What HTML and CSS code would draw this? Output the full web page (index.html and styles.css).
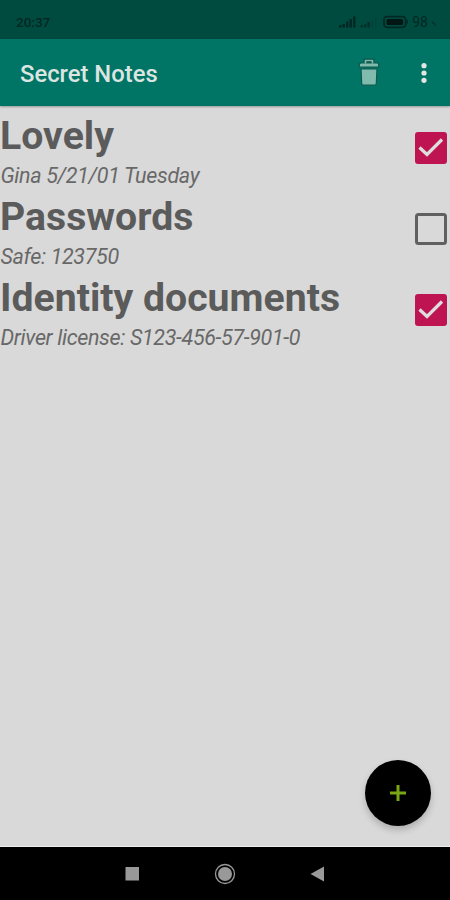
FILE: index.html
```
<!DOCTYPE html>
<html lang="en">
<head>
<meta charset="utf-8">
<title>Secret Notes</title>
<link rel="stylesheet" href="styles.css">
</head>
<body>
<div class="screen">
  <div class="statusbar">
    <span class="clock">20:37</span>
    <div class="status-icons">
      <svg class="signal" width="40" height="14" viewBox="0 0 40 14">
        <path d="M0 10h2.500v2.500H0zM3.500 9h2.500v3.500h-2.500zM7 6.500h2.500v6H7zM10.500 4h2.500v8.500h-2.500zM14 1.500h2.500v11H14z" fill="#032722"/>
        <path d="M21.500 10h2.500v2.500h-2.500zM25 9h2.500v3.500h-2.500zM28.500 7h2.500v5.500h-2.500z" fill="#03312a"/>
        <path d="M32.500 5h1.500v7.500h-1.500zM36 2.500h1.500v10H36z" fill="#034038"/>
      </svg>
      <svg class="battery" width="26" height="14" viewBox="0 0 26 14">
        <rect x="1" y="1.700" width="21.500" height="10.600" rx="3" fill="none" stroke="#032722" stroke-width="1.700"/>
        <rect x="3.500" y="4" width="16.500" height="6" rx="1.500" fill="#021713"/>
        <path d="M23.500 3.500q3 3.500 0 7z" fill="#032722"/>
      </svg>
      <span class="level">98</span>
      <svg class="charge" width="6" height="8" viewBox="0 0 6 8"><path d="M1 1.500l2 2.500M3.500 3.500L5 6" stroke="#03332c" stroke-width="1.400"/></svg>
    </div>
  </div>
  <header class="appbar">
    <h1 class="appbar-title">Secret Notes</h1>
    <svg class="trash" width="24" height="32" viewBox="0 0 24 32">
      <path d="M8.500 7V3.500h7V7" fill="none" stroke="#0a4d43" stroke-width="3.600"/>
      <path d="M2.300 8Q2.300 6 4.300 6h15.400q2 0 2 2v2.200H2.300zM4 12h16l-.7 14.500q-.2 1.700-2 1.700H6.700q-1.800 0-2-1.700z" fill="#80bbad" stroke="#0a5b4f" stroke-width="1.200"/>
      <path d="M8.500 6.500V3.500h7v3" fill="none" stroke="#80bbad" stroke-width="1.700"/>
    </svg>
    <svg class="more" width="8" height="22" viewBox="0 0 8 22"><g fill="#e2e7e5"><circle cx="4" cy="3.700" r="2.600"/><circle cx="4" cy="11" r="2.600"/><circle cx="4" cy="18.300" r="2.600"/></g></svg>
  </header>
  <main class="content">
    <section class="note">
      <div class="note-text"><h2 class="note-title">Lovely</h2><p class="note-body">Gina 5/21/01 Tuesday</p></div>
      <svg class="check" width="34" height="34" viewBox="0 0 34 34"><rect x="1" y="1" width="32" height="32" rx="3" fill="#bf1452"/><path d="M5.500 16.500L13 23.500 28 8.500" fill="none" stroke="#dedede" stroke-width="3.200"/></svg>
    </section>
    <section class="note">
      <div class="note-text"><h2 class="note-title">Passwords</h2><p class="note-body">Safe: 123750</p></div>
      <svg class="check" width="34" height="34" viewBox="0 0 34 34"><rect x="2.500" y="2.500" width="29" height="29" rx="2" fill="none" stroke="#606060" stroke-width="3"/></svg>
    </section>
    <section class="note">
      <div class="note-text"><h2 class="note-title">Identity documents</h2><p class="note-body">Driver license: S123-456-57-901-0</p></div>
      <svg class="check" width="34" height="34" viewBox="0 0 34 34"><rect x="1" y="1" width="32" height="32" rx="3" fill="#bf1452"/><path d="M5.500 16.500L13 23.500 28 8.500" fill="none" stroke="#dedede" stroke-width="3.200"/></svg>
    </section>
    <button class="fab" aria-label="Add note"><svg width="18" height="18" viewBox="0 0 18 18"><path d="M9 1v16M1 9h16" stroke="#79a615" stroke-width="3"/></svg></button>
  </main>
  <nav class="navbar">
    <svg width="24" height="24" viewBox="0 0 24 24"><rect x="5.500" y="5" width="13.500" height="13.500" fill="#999"/></svg>
    <svg width="24" height="24" viewBox="0 0 24 24"><circle cx="12" cy="12" r="9.500" fill="none" stroke="#999" stroke-width="1.300"/><circle cx="12" cy="12" r="7" fill="#999"/></svg>
    <svg width="24" height="24" viewBox="0 0 24 24"><path d="M4.500 12L18 4.500v15z" fill="#999"/></svg>
  </nav>
</div>
</body>
</html>
```
FILE: styles.css
```
* { box-sizing: border-box; }
body { margin: 0; font-family: Roboto, sans-serif; }
h1, h2, p { margin: 0; }
svg { display: block; flex: none; }
.screen { width: 450px; height: 900px; display: flex; flex-direction: column; overflow: hidden; background: #d9d9d9; }
.statusbar { height: 39px; flex: none; padding: 4px 13px 0 16px; display: flex; align-items: center; justify-content: space-between; background: #004b40; color: #032722; }
.clock { font-size: 13.5px; font-weight: 500; }
.status-icons { display: flex; align-items: center; }
.battery { margin-left: 4px; }
.level { margin-left: 3px; font-size: 14px; }
.charge { margin: 4px 0 0 3px; }
.appbar { height: 67px; flex: none; position: relative; z-index: 1; padding: 1px 22px 0 20px; display: flex; align-items: center; background: #007565; box-shadow: 0 1px 2px rgba(0, 0, 0, .3); }
.appbar-title { flex: 1; padding-top: 2px; font-size: 23.8px; font-weight: 500; line-height: 30px; color: #dde5e2; }
.more { margin-left: 39px; }
.content { flex: 1; position: relative; padding-top: 8px; border-bottom: 1px solid #efefef; }
.note { height: 81px; display: flex; justify-content: space-between; }
.note-title { margin-top: -1px; font-size: 39.2px; font-weight: 700; line-height: 46px; color: #5b5b5b; white-space: nowrap; }
.note-body { margin-top: 4px; padding-left: .5px; font-size: 21.5px; letter-spacing: -.35px; font-style: italic; font-weight: 400; line-height: 26px; color: #686868; white-space: nowrap; }
.check { margin: 17px 2px 0 0; }
.fab { position: absolute; right: 19px; bottom: 20px; width: 66px; height: 66px; border: 0; border-radius: 50%; padding: 0; display: grid; place-items: center; background: #000; box-shadow: 0 4px 7px rgba(0, 0, 0, .2); }
.navbar { height: 53px; flex: none; padding: 0 120px; display: flex; align-items: center; justify-content: space-between; background: #000; }
```
